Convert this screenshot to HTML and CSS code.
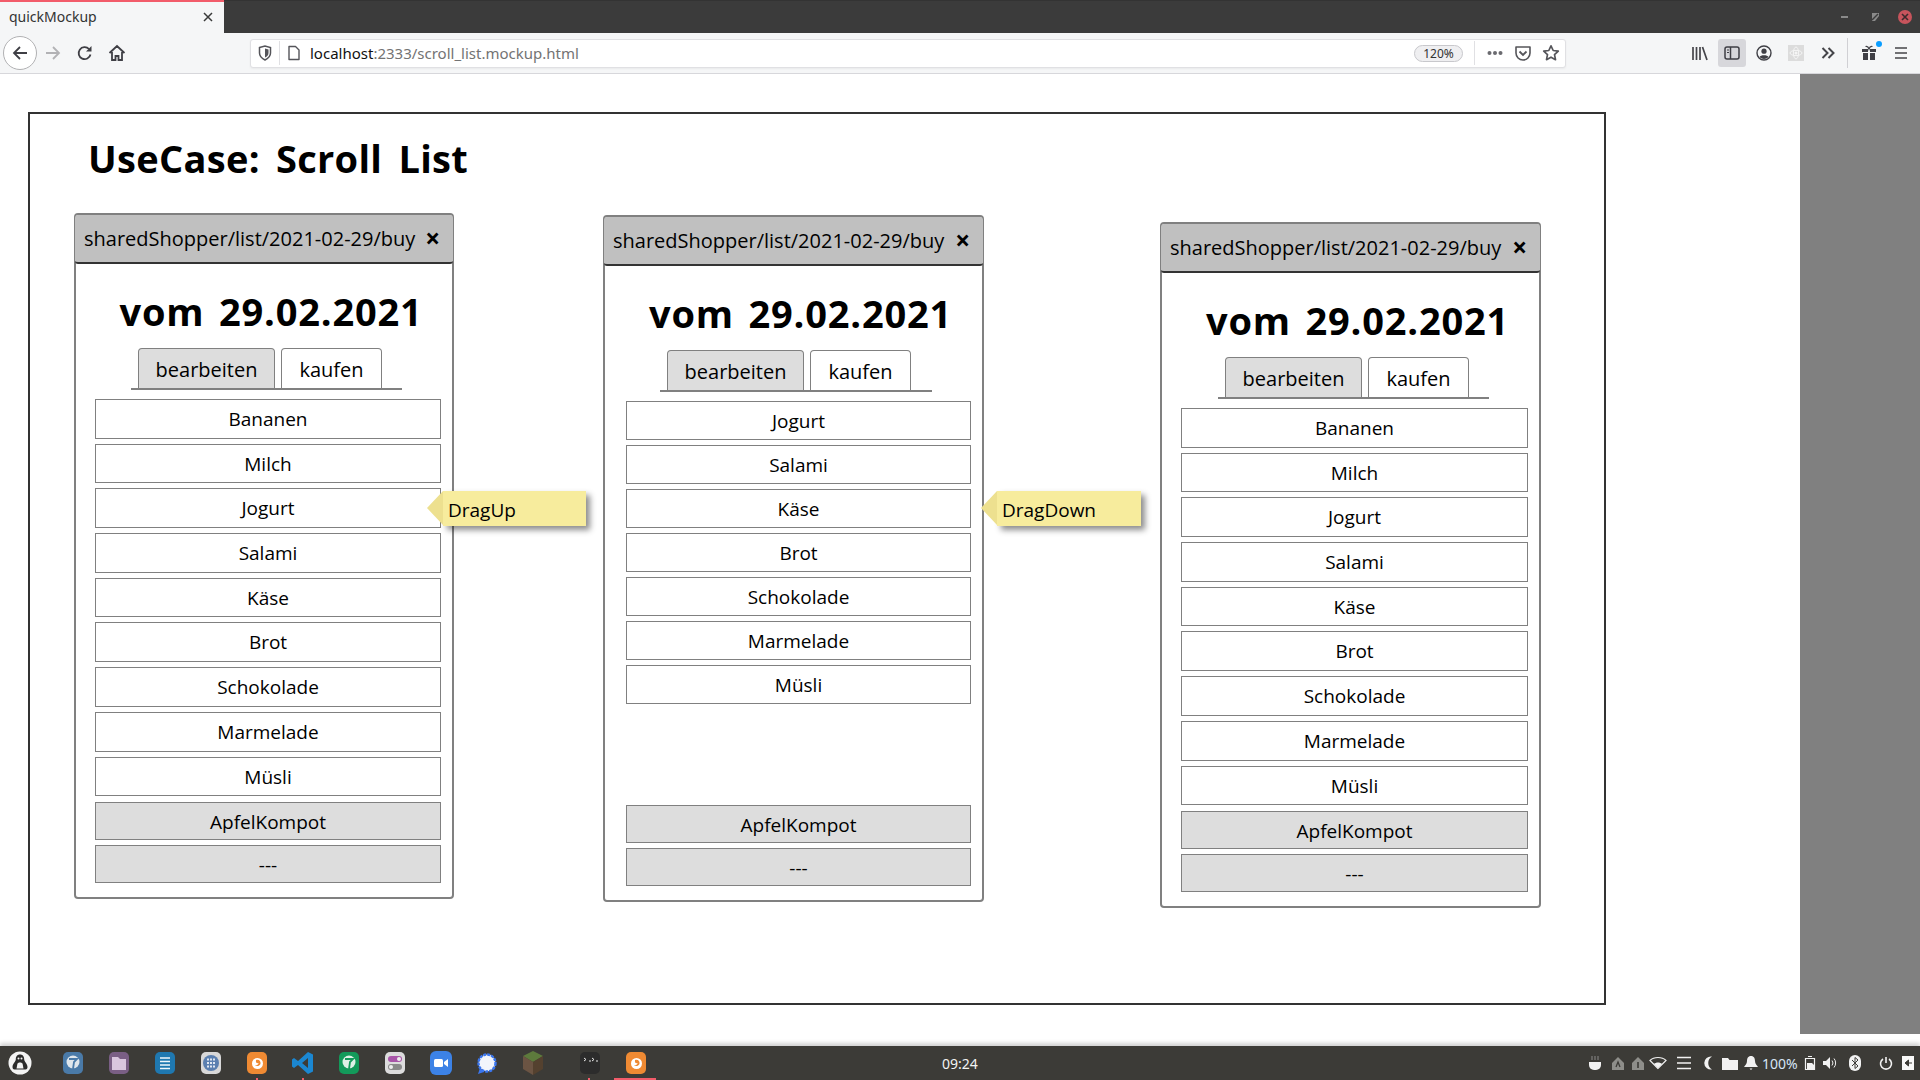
FILE: index.html
```html
<!DOCTYPE html>
<html lang="en">
<head>
    <meta charset="UTF-8">
    <meta name="viewport" content="width=device-width, initial-scale=1.0">
    <title>quickMockup</title>
    <link rel="stylesheet" href="styles.css">
</head>
<body>
    <!-- browser tab strip -->
    <div class="tabstrip">
        <div class="tab">
            <span class="tab-title">quickMockup</span>
            <svg class="tab-close" width="12" height="12" viewBox="0 0 12 12"><path d="M2 2l8 8M10 2l-8 8" stroke="#3a3a3a" stroke-width="1.5"/></svg>
        </div>
        <div class="window-controls">
            <svg width="14" height="14" viewBox="0 0 14 14"><rect x="3" y="6" width="7" height="2" fill="#8a8a8a"/></svg>
            <svg width="14" height="14" viewBox="0 0 14 14"><path d="M4 3h7v3l-4 5H4z" fill="#8a8a8a"/><path d="M4 10l6-6" stroke="#3b3b3b" stroke-width="1.5"/></svg>
            <span class="win-close">
                <svg width="8" height="8" viewBox="0 0 8 8"><path d="M1 1l6 6M7 1L1 7" stroke="#3b2a2c" stroke-width="1.6"/></svg>
            </span>
        </div>
    </div>

    <!-- browser toolbar -->
    <div class="toolbar">
        <div class="nav">
            <span class="nav-btn back">
                <svg width="18" height="18" viewBox="0 0 18 18"><path d="M16 9H3M9 3L3 9l6 6" fill="none" stroke="#3f3f45" stroke-width="1.8"/></svg>
            </span>
            <span class="nav-btn">
                <svg width="18" height="18" viewBox="0 0 18 18"><path d="M2 9h13M9 3l6 6-6 6" fill="none" stroke="#b2b2b5" stroke-width="1.8"/></svg>
            </span>
            <span class="nav-btn">
                <svg width="18" height="18" viewBox="0 0 18 18"><path d="M14.5 10.5A6 6 0 1 1 13 5" fill="none" stroke="#3f3f45" stroke-width="1.8"/><path d="M15.5 2v5.5H10z" fill="#3f3f45"/></svg>
            </span>
            <span class="nav-btn">
                <svg width="18" height="18" viewBox="0 0 18 18"><path d="M1.5 9L9 2l7.5 7M4 8v8h3.5v-4h3v4H14V8" fill="none" stroke="#3f3f45" stroke-width="1.8"/></svg>
            </span>
        </div>
        <div class="urlbar">
            <svg class="url-shield" width="14" height="16" viewBox="0 0 14 16"><path d="M1.5 2.5L7 1l5.500 1.500V8c0 3-2.500 5.500-5.500 7-3-1.500-5.500-4-5.500-7z" fill="none" stroke="#55555a" stroke-width="1.500"/><path d="M7 3.500l3.500 1V8c0 2-1.500 3.500-3.500 4.500z" fill="#55555a"/></svg>
            <span class="url-sep"></span>
            <svg class="url-page" width="14" height="16" viewBox="0 0 14 16"><path d="M2 1.500h6.500l3.500 3.500v9.500H2z" fill="none" stroke="#55555a" stroke-width="1.400" stroke-linejoin="round"/></svg>
            <span class="url-text">localhost<span class="url-dim">:2333/scroll_list.mockup.html</span></span>
            <span class="zoom-pill">120%</span>
            <span class="url-sep wide"></span>
            <svg width="16" height="16" viewBox="0 0 16 16"><circle cx="2.500" cy="8" r="2" fill="#6a6a6f"/><circle cx="8" cy="8" r="2" fill="#6a6a6f"/><circle cx="13.500" cy="8" r="2" fill="#6a6a6f"/></svg>
            <svg class="url-pocket" width="16" height="16" viewBox="0 0 16 16"><path d="M1 2h14v6a7 7 0 0 1-14 0z" fill="none" stroke="#55555a" stroke-width="1.600" stroke-linejoin="round"/><path d="M4.500 6.500L8 10l3.500-3.500" fill="none" stroke="#55555a" stroke-width="1.800"/></svg>
            <svg class="url-star" width="18" height="18" viewBox="0 0 18 18"><path d="M9 1.800l2.200 4.700 5.100.6-3.800 3.500 1 5.100L9 13.200l-4.500 2.500 1-5.100-3.800-3.500 5.100-.6z" fill="none" stroke="#55555a" stroke-width="1.700" stroke-linejoin="round"/></svg>
        </div>
        <div class="tools">
            <span class="tool">
                <svg width="16" height="15" viewBox="0 0 16 15"><path d="M1 1v13M4.500 1v13M8 1v13M10.500 1l4.500 13" stroke="#45454a" stroke-width="1.700"/></svg>
            </span>
            <span class="tool active">
                <svg width="16" height="14" viewBox="0 0 16 14"><rect x="1" y="1" width="14" height="12" rx="2" fill="none" stroke="#3f3f45" stroke-width="1.500"/><path d="M6.500 1v12" stroke="#3f3f45" stroke-width="1.500"/><path d="M3 4h2M3 6.500h2" stroke="#3f3f45" stroke-width="1"/></svg>
            </span>
            <span class="tool">
                <svg width="16" height="16" viewBox="0 0 16 16"><circle cx="8" cy="8" r="7" fill="none" stroke="#3f3f45" stroke-width="1.400"/><circle cx="8" cy="6.200" r="2.600" fill="#3f3f45"/><path d="M3.500 12c1-2.200 8-2.200 9 0a6 6 0 0 1-9 0z" fill="#3f3f45"/></svg>
            </span>
            <span class="tool">
                <svg width="16" height="16" viewBox="0 0 16 16"><rect width="16" height="16" fill="#dcdcdc"/><circle cx="8" cy="8" r="1.500" fill="#f5f5f5"/><ellipse cx="8" cy="8" rx="6" ry="2.600" fill="none" stroke="#f5f5f5"/><ellipse cx="8" cy="8" rx="2.600" ry="6" fill="none" stroke="#f5f5f5"/></svg>
            </span>
            <span class="tool">
                <svg width="14" height="14" viewBox="0 0 14 14"><path d="M1.500 2l5 5-5 5M7.500 2l5 5-5 5" fill="none" stroke="#45454a" stroke-width="2"/></svg>
            </span>
            <span class="tool-sep"></span>
            <span class="tool gift">
                <svg width="18" height="18" viewBox="0 0 18 18"><path d="M2 5h6v3H2zM10 5h6v3h-6zM3 9h5v7H3zM10 9h5v7h-5z" fill="#3f3f45"/><path d="M5.500 2.500C7 2 8.500 3.500 9 5c.5-1.500 2-3 3.500-2.500" fill="none" stroke="#3f3f45" stroke-width="1.300"/></svg>
                <i class="gift-dot"></i>
            </span>
            <span class="tool">
                <svg width="14" height="14" viewBox="0 0 14 14"><path d="M1 2h12M1 7h12M1 12h12" stroke="#45454a" stroke-width="1.600"/></svg>
            </span>
        </div>
    </div>

    <!-- page content -->
    <div class="viewport">
        <div class="page">
            <div class="mock-frame">
                <h1 class="mock-title">UseCase: Scroll List</h1>
                <div class="mock-row">

                    <div class="phone phone-one">
                        <div class="phone-head"><span>sharedShopper/list/2021-02-29/buy</span><b class="phone-x">×</b></div>
                        <h2 class="phone-date">vom 29.02.2021</h2>
                        <div class="tabs">
                            <span class="tab-btn selected">bearbeiten</span>
                            <span class="tab-btn">kaufen</span>
                        </div>
                        <div class="rows">
                            <div class="row">Bananen</div>
                            <div class="row">Milch</div>
                            <div class="row">Jogurt</div>
                            <div class="row">Salami</div>
                            <div class="row">Käse</div>
                            <div class="row">Brot</div>
                            <div class="row">Schokolade</div>
                            <div class="row">Marmelade</div>
                            <div class="row">Müsli</div>
                        </div>
                        <div class="rows-done">
                            <div class="row done">ApfelKompot</div>
                            <div class="row done">---</div>
                        </div>
                        <div class="note">DragUp</div>
                    </div>

                    <div class="phone phone-two">
                        <div class="phone-head"><span>sharedShopper/list/2021-02-29/buy</span><b class="phone-x">×</b></div>
                        <h2 class="phone-date">vom 29.02.2021</h2>
                        <div class="tabs">
                            <span class="tab-btn selected">bearbeiten</span>
                            <span class="tab-btn">kaufen</span>
                        </div>
                        <div class="rows">
                            <div class="row">Jogurt</div>
                            <div class="row">Salami</div>
                            <div class="row">Käse</div>
                            <div class="row">Brot</div>
                            <div class="row">Schokolade</div>
                            <div class="row">Marmelade</div>
                            <div class="row">Müsli</div>
                        </div>
                        <div class="rows-done">
                            <div class="row done">ApfelKompot</div>
                            <div class="row done">---</div>
                        </div>
                        <div class="note">DragDown</div>
                    </div>

                    <div class="phone phone-three">
                        <div class="phone-head"><span>sharedShopper/list/2021-02-29/buy</span><b class="phone-x">×</b></div>
                        <h2 class="phone-date">vom 29.02.2021</h2>
                        <div class="tabs">
                            <span class="tab-btn selected">bearbeiten</span>
                            <span class="tab-btn">kaufen</span>
                        </div>
                        <div class="rows">
                            <div class="row">Bananen</div>
                            <div class="row">Milch</div>
                            <div class="row">Jogurt</div>
                            <div class="row">Salami</div>
                            <div class="row">Käse</div>
                            <div class="row">Brot</div>
                            <div class="row">Schokolade</div>
                            <div class="row">Marmelade</div>
                            <div class="row">Müsli</div>
                        </div>
                        <div class="rows-done">
                            <div class="row done">ApfelKompot</div>
                            <div class="row done">---</div>
                        </div>
                    </div>

                </div>
            </div>
        </div>
        <div class="sidebar-gray"></div>
    </div>

    <!-- desktop panel -->
    <div class="taskbar">
        <div class="launcher">
            <span class="dock-item">
                <svg width="24" height="24" viewBox="0 0 24 24"><circle cx="12" cy="12" r="11.500" fill="#f4f4f4"/><path d="M12 3.500c-3 0-4.200 2.300-4.200 5 0 2.200-3.300 4-3.300 7.500 0 1 .5 2.500 2 2.500h11c1.500 0 2-1.500 2-2.500 0-3.500-3.300-5.300-3.300-7.500 0-2.700-1.200-5-4.200-5z" fill="#2c2c2c"/><path d="M9.500 12.500c1-1.500 4-1.500 5 0l1 5h-7z" fill="#f4f4f4"/><circle cx="10.500" cy="7.500" r="1" fill="#f4f4f4"/><circle cx="13.500" cy="7.500" r="1" fill="#f4f4f4"/></svg>
            </span>
            <span class="dock-item">
                <svg width="20" height="22" viewBox="0 0 20 22"><rect width="20" height="22" rx="5" fill="#4a7aa8"/><circle cx="10" cy="10" r="6.500" fill="#dfe6ec"/><path d="M6 7h8l-3 3-1 7" fill="none" stroke="#4a7aa8" stroke-width="1.800"/></svg>
            </span>
            <span class="dock-item">
                <svg width="20" height="22" viewBox="0 0 20 22"><rect width="20" height="22" rx="5" fill="#7a5f85"/><path d="M3 5h6l2 2h6v11H3z" fill="#d9c6de"/></svg>
            </span>
            <span class="dock-item">
                <svg width="20" height="22" viewBox="0 0 20 22"><rect width="20" height="22" rx="5" fill="#1f78b0"/><path d="M5 6h10M5 9.500h10M5 13h10M5 16.500h10" stroke="#eef6fb" stroke-width="1.400"/></svg>
            </span>
            <span class="dock-item">
                <svg width="20" height="22" viewBox="0 0 20 22"><rect width="20" height="22" rx="5" fill="#d8d8d8"/><circle cx="10" cy="11" r="8" fill="#5a7fb0"/><path d="M6 7.500h8M6 11h8M6 14.500h8" stroke="#dfe7f2" stroke-width="1.800" stroke-dasharray="2 1"/></svg>
            </span>
            <span class="dock-item">
                <svg width="20" height="22" viewBox="0 0 20 22"><rect width="20" height="22" rx="5" fill="#ef8a33"/><circle cx="10.500" cy="11.500" r="5.500" fill="#fff"/><path d="M9 8c3-1 5 1 4.500 4-1 2-4 3-5.500 1 2 .5 3.500-.5 3.500-2-1.500.5-3 0-2.500-3z" fill="#ef8a33"/></svg>
            </span>
            <span class="dock-item">
                <svg width="22" height="24" viewBox="0 0 22 24"><path d="M16 1l5 2.500v17L16 23 6 14l-4 3-2-1.500V8.500L2 7l4 3zM16 7l-6 5 6 5z" fill="#1b87d1"/></svg>
            </span>
            <span class="dock-item">
                <svg width="20" height="22" viewBox="0 0 20 22"><rect width="20" height="22" rx="5" fill="#139a5a"/><circle cx="10" cy="10" r="6.500" fill="#dff0e6"/><path d="M6 7h8l-3 3-1 7" fill="none" stroke="#139a5a" stroke-width="1.800"/></svg>
            </span>
            <span class="dock-item">
                <svg width="20" height="22" viewBox="0 0 20 22"><rect width="20" height="22" rx="5" fill="#dcdcdc"/><rect x="3" y="4" width="14" height="6" rx="3" fill="#a855a8"/><circle cx="14" cy="7" r="2" fill="#eee"/><rect x="3" y="12" width="14" height="6" rx="3" fill="#8a8a8a"/><circle cx="6" cy="15" r="2" fill="#eee"/></svg>
            </span>
            <span class="dock-item">
                <svg width="22" height="24" viewBox="0 0 22 24"><rect width="22" height="24" rx="6" fill="#3c82e6"/><rect x="4" y="8" width="9" height="8" rx="1.500" fill="#fff"/><path d="M14 11l4-3v8l-4-3z" fill="#fff"/></svg>
            </span>
            <span class="dock-item">
                <svg width="22" height="24" viewBox="0 0 22 24"><circle cx="11" cy="12" r="8.500" fill="#f2f5fb" stroke="#3a76f0" stroke-width="2.400" stroke-dasharray="3 1"/><path d="M2 23l2-6 4 4z" fill="#3a76f0"/></svg>
            </span>
            <span class="dock-item">
                <svg width="22" height="26" viewBox="0 0 22 26"><path d="M11 1l10 5-10 6L1 6z" fill="#5d7a3c"/><path d="M1 6l10 6v13L1 19z" fill="#6b5443"/><path d="M21 6l-10 6v13l10-6z" fill="#54412f"/></svg>
            </span>
            <span class="dock-item spaced">
                <svg width="20" height="22" viewBox="0 0 20 22"><rect width="20" height="22" rx="5" fill="#2c2c2c"/><path d="M4 6l2 1.500L4 9M9 9h2M12 6l2 1.500L12 9M16 9h2" fill="none" stroke="#e8e8e8" stroke-width="1"/></svg>
            </span>
            <span class="dock-item">
                <svg width="20" height="22" viewBox="0 0 20 22"><rect width="20" height="22" rx="5" fill="#ef8a33"/><circle cx="10.500" cy="11.500" r="5.500" fill="#fff"/><path d="M9 8c3-1 5 1 4.500 4-1 2-4 3-5.500 1 2 .5 3.500-.5 3.500-2-1.500.5-3 0-2.500-3z" fill="#ef8a33"/></svg>
            </span>
            <i class="run-mark mark-a"></i>
            <i class="run-mark mark-b"></i>
            <i class="run-mark mark-c"></i>
            <i class="run-mark mark-d"></i>
        </div>
        <div class="clock">09:24</div>
        <div class="tray">
            <svg width="14" height="16" viewBox="0 0 14 16"><path d="M1 7h12v3a5 5 0 0 1-5 5H6a5 5 0 0 1-5-5z" fill="#f2f2f2"/><path d="M4 1v4M7 1v4M10 1v4" stroke="#8a8a8a"/></svg>
            <svg class="tray-home-a" width="14" height="14" viewBox="0 0 14 14"><path d="M7 1l6 6v7H1V7z" fill="#8e8e8a"/><path d="M5 11l2-5 2 5" fill="none" stroke="#3c3b37" stroke-width="1.300"/></svg>
            <svg width="14" height="14" viewBox="0 0 14 14"><path d="M7 1l6 6v7H1V7z" fill="#8e8e8a"/><path d="M7 6v6" stroke="#3c3b37" stroke-width="1.600"/></svg>
            <svg class="tray-wifi" width="18" height="14" viewBox="0 0 18 14"><path d="M9 12.500L1 4.500c4-4 12-4 16 0z" fill="none" stroke="#f2f2f2" stroke-width="1.200"/><path d="M9 12l-4-4c2-2 6-2 8 0z" fill="#f2f2f2"/></svg>
            <svg class="tray-menu" width="14" height="14" viewBox="0 0 14 14"><path d="M0 1.500h14M0 7h14M0 12.500h14" stroke="#f2f2f2" stroke-width="1.500"/></svg>
            <svg class="tray-moon" width="12" height="14" viewBox="0 0 12 14"><path d="M10 .5A6.600 6.600 0 1 0 10 13.500A7.500 7.500 0 0 1 10 .5z" fill="#f2f2f2"/></svg>
            <svg class="tray-folder" width="16" height="13" viewBox="0 0 16 13"><path d="M0 1h6l1.500 2H16v10H0z" fill="#f2f2f2"/></svg>
            <svg width="14" height="14" viewBox="0 0 14 14"><path d="M7 0c3 0 4 2.500 4 5 0 3 2 4.500 3 6H0c1-1.500 3-3 3-6 0-2.500 1-5 4-5zM5.500 12.500h3L7 14z" fill="#f2f2f2"/></svg>
            <span class="tray-pct">100%</span>
            <svg class="tray-battery" width="12" height="14" viewBox="0 0 12 14"><path d="M1.500 2.500h9v11h-9zM4 .500h4" fill="none" stroke="#f2f2f2" stroke-width="1.200"/><path d="M3 7h5l3 3v3H3z" fill="#f2f2f2"/></svg>
            <svg class="tray-sound" width="14" height="14" viewBox="0 0 14 14"><path d="M0 5h3l4-4v12l-4-4H0z" fill="#f2f2f2"/><path d="M9 4.500a4 4 0 0 1 0 5M11 2.500a7 7 0 0 1 0 9" fill="none" stroke="#f2f2f2"/></svg>
            <svg class="tray-blue" width="12" height="16" viewBox="0 0 12 16"><rect width="12" height="16" rx="6" fill="#f2f2f2"/><path d="M3 5l6 6-3 2.500v-11L9 5l-6 6" fill="none" stroke="#3c3b37"/></svg>
            <svg class="tray-power" width="14" height="14" viewBox="0 0 14 14"><path d="M4 3a5.500 5.500 0 1 0 6 0M7 1v6" fill="none" stroke="#f2f2f2" stroke-width="1.600"/></svg>
            <svg class="tray-exit" width="12" height="14" viewBox="0 0 12 14"><rect width="12" height="14" fill="#f8f8f8"/><path d="M10 7H4M6.500 4L3 7l3.500 3z" fill="#3c3b37" stroke="#3c3b37"/></svg>
        </div>
    </div>
</body>
</html>
```
FILE: styles.css
```css
* {
    box-sizing: border-box;
}
body {
    margin: 0;
    width: 1920px;
    height: 1080px;
    overflow: hidden;
    display: flex;
    flex-direction: column;
    background-color: white;
    font-family: "Noto Sans", sans-serif;
}

/* tab strip */
.tabstrip {
    height: 33px;
    display: flex;
    justify-content: space-between;
    background-color: #3b3b3b;
    border-top: 1px solid #333;
}
.tab {
    width: 224px;
    margin-top: -1px;
    display: flex;
    align-items: center;
    justify-content: space-between;
    padding: 0 10px 2px 9px;
    background-color: #f5f6f7;
    border-top: 2px solid #f25c6a;
    font-size: 14px;
    color: #333;
}
.window-controls {
    display: flex;
    align-items: center;
    gap: 16px;
    padding-right: 8px;
}
.win-close {
    width: 14px;
    height: 14px;
    border-radius: 50%;
    background-color: #c7545c;
    display: flex;
    align-items: center;
    justify-content: center;
}

/* toolbar */
.toolbar {
    height: 41px;
    display: flex;
    align-items: center;
    background-color: #f5f6f7;
    border-bottom: 1px solid #d7d7db;
}
.nav {
    width: 250px;
    display: flex;
    align-items: center;
    padding-left: 3px;
}
.nav-btn {
    width: 32px;
    height: 34px;
    display: flex;
    align-items: center;
    justify-content: center;
}
.nav-btn.back {
    width: 34px;
    border: 1px solid #b1b1b3;
    border-radius: 50%;
    background-color: white;
}
.urlbar {
    width: 1316px;
    height: 29px;
    display: flex;
    align-items: center;
    padding: 0 5px 0 7px;
    background-color: white;
    border: 1px solid #e0e0e3;
    border-radius: 3px;
    box-shadow: 0 1px 2px rgba(0, 0, 0, 0.05);
}
.url-sep {
    width: 1px;
    height: 24px;
    margin: 0 7px;
    background-color: #e0e0e3;
}
.url-sep.wide {
    margin: 0 12px 0 11px;
}
.url-text {
    margin-left: 9px;
    flex: 1;
    font-size: 15px;
    color: #111;
}
.url-dim {
    color: #737373;
}
.zoom-pill {
    width: 49px;
    height: 17px;
    line-height: 15px;
    text-align: center;
    font-size: 12px;
    color: #333;
    background-color: #efeff1;
    border: 1px solid #c8c8cc;
    border-radius: 9px;
}
.url-pocket {
    margin-left: 12px;
}
.url-star {
    margin-left: 11px;
}
.tools {
    flex: 1;
    display: flex;
    align-items: center;
    padding-left: 118px;
}
.tool {
    position: relative;
    width: 32px;
    height: 28px;
    display: flex;
    align-items: center;
    justify-content: center;
}
.tool.active {
    width: 28px;
    margin: 0 2px;
    border-radius: 3px;
    background-color: #d7d7db;
}
.tool-sep {
    width: 1px;
    height: 30px;
    margin: 0 5px 0 3px;
    background-color: #d0d0d4;
}
.gift-dot {
    position: absolute;
    top: 2px;
    right: 3px;
    width: 6px;
    height: 6px;
    border-radius: 50%;
    background-color: #0a9dff;
}

/* page area */
.viewport {
    height: 960px;
    display: flex;
}
.page {
    width: 1800px;
    padding: 38px 0 0 28px;
}
.sidebar-gray {
    width: 120px;
    background-color: #808080;
}
.mock-frame {
    width: 1578px;
    height: 893px;
    border: 2px solid #333;
    font-family: "Open Sans", sans-serif;
    color: black;
}
.mock-title {
    margin: 19px 0 0 58px;
    height: 80px;
    font-size: 38px;
    line-height: 50px;
    font-weight: 700;
    letter-spacing: 0.3px;
    word-spacing: 6px;
}
.mock-row {
    display: flex;
    align-items: flex-start;
}
.phone {
    position: relative;
    width: 380px;
    height: 686px;
    display: flex;
    flex-direction: column;
    border: 2px solid #808080;
    border-radius: 4px;
    padding-bottom: 14px;
}
.phone-one {
    margin-left: 44px;
}
.phone-two {
    margin: 2px 0 0 149px;
    width: 381px;
    height: 687px;
}
.phone-three {
    width: 381px;
    margin: 9px 0 0 176px;
}
.phone-head {
    height: 49px;
    margin: 0 -1px;
    display: flex;
    align-items: center;
    justify-content: space-between;
    padding: 0 13px 1px 9px;
    background-color: #c0c0c0;
    border-bottom: 2px solid #333;
    border-radius: 3px;
    font-size: 20px;
}
.phone-x {
    font-size: 26px;
    line-height: 1;
}
.phone-date {
    margin: 22px 0 0 0;
    height: 50px;
    text-align: center;
    padding-left: 14px;
    font-size: 38px;
    line-height: 50px;
    font-weight: 700;
    letter-spacing: 0.8px;
    word-spacing: 4px;
}
.tabs {
    width: 271px;
    height: 42px;
    margin: 12px 0 0 55px;
    display: flex;
    align-items: stretch;
    gap: 6px;
    padding-left: 7px;
    border-bottom: 2px solid #808080;
}
.phone-two .tabs {
    width: 272px;
}
.phone-three .tabs {
    margin-left: 56px;
}
.tab-btn {
    width: 137px;
    height: 42px;
    text-align: center;
    line-height: 41px;
    font-size: 20px;
    background-color: white;
    border: 1px solid #808080;
    border-bottom-width: 2px;
    border-radius: 4px 4px 0 0;
}
.tab-btn.selected {
    background-color: #dddddd;
}
.tab-btn + .tab-btn {
    width: 101px;
}
.rows {
    margin: 9px 11px 0 19px;
    display: flex;
    flex-direction: column;
    gap: 5px;
}
.phone-two .rows {
    margin: 9px 11px 0 21px;
}
.row {
    height: 39.700px;
    line-height: 38px;
    text-align: center;
    font-size: 19px;
    background-color: white;
    border: 1px solid #808080;
}
.phone-two .row {
    height: 39px;
}
.rows-done {
    margin: auto 11px 0 19px;
    display: flex;
    flex-direction: column;
    gap: 5px;
}
.phone-two .rows-done {
    margin: auto 11px 0 21px;
}
.row.done,
.phone-two .row.done {
    height: 38px;
    background-color: #dddddd;
}

/* sticky note beside the list */
.note {
    position: absolute;
    top: 276px;
    left: 367px;
    width: 143px;
    height: 35px;
    padding-left: 5px;
    line-height: 38px;
    font-size: 19px;
    background-color: #f7ec9d;
    box-shadow: 4px 4px 6px rgba(0, 0, 0, 0.45);
}
.note::before {
    content: "";
    position: absolute;
    top: 0;
    left: -16px;
    border-style: solid;
    border-width: 17.500px 16px 17.500px 0;
    border-color: transparent #ede08f transparent transparent;
}
.phone-two .note {
    top: 274px;
    left: 392px;
    width: 144px;
}

/* desktop panel */
.taskbar {
    position: relative;
    margin-top: 12px;
    flex: 1;
    height: 34px;
    display: flex;
    align-items: center;
    background-color: #3c3b37;
    color: #f2f2f2;
    box-shadow: 0 -3px 4px rgba(0, 0, 0, 0.18);
}
.launcher {
    width: 960px;
    flex: none;
    display: flex;
    align-items: center;
    padding-left: 45px;
}
.dock-item {
    width: 46px;
    height: 34px;
    display: flex;
    align-items: center;
    justify-content: center;
}
.dock-item:first-child {
    margin: 0 7px 0 -48px;
}
.dock-item.spaced {
    margin-left: 11px;
}
.run-mark {
    position: absolute;
    bottom: 0;
    width: 2px;
    height: 2px;
    background-color: #f25c6a;
}
.mark-a {
    left: 256px;
}
.mark-b {
    left: 302px;
}
.mark-c {
    left: 588px;
}
.mark-d {
    left: 614px;
    width: 42px;
}
.clock {
    position: absolute;
    left: 0;
    right: 0;
    text-align: center;
    font-size: 14px;
}
.tray {
    margin-left: auto;
    display: flex;
    align-items: center;
    gap: 6px;
    padding-right: 6px;
}
.tray-home-a {
    margin-left: 3px;
}
.tray-wifi {
    margin-left: -2px;
}
.tray-menu {
    margin-left: 4px;
}
.tray-moon {
    margin-left: 5px;
}
.tray-folder {
    margin-left: 2px;
}
.tray-pct {
    width: 35px;
    margin-left: -2px;
    font-size: 14px;
    white-space: nowrap;
    color: #d6e6f7;
}
.tray-battery,
.tray-sound {
    margin-left: 1px;
}
.tray-blue {
    margin-left: 6px;
}
.tray-power {
    margin-left: 12px;
}
.tray-exit {
    margin-left: 3px;
}
```
